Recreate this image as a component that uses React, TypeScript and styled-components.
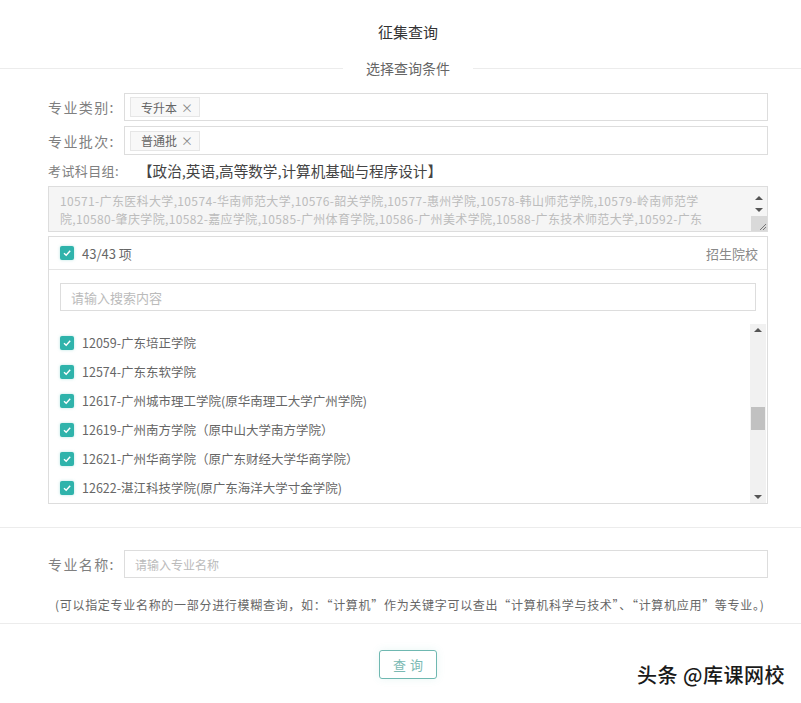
import React from "react";
import styled, { createGlobalStyle } from "styled-components";

const schools = [
    "12059-广东培正学院",
    "12574-广东东软学院",
    "12617-广州城市理工学院(原华南理工大学广州学院)",
    "12619-广州南方学院（原中山大学南方学院）",
    "12621-广州华商学院（原广东财经大学华商学院）",
    "12622-湛江科技学院(原广东海洋大学寸金学院)",
];

const collegeText =
    "10571-广东医科大学,10574-华南师范大学,10576-韶关学院,10577-惠州学院,10578-韩山师范学院,10579-岭南师范学院,10580-肇庆学院,10582-嘉应学院,10585-广州体育学院,10586-广州美术学院,10588-广东技术师范大学,10592-广东财经大学,10822-广东白云学院";

const GlobalStyle = createGlobalStyle`
    * { box-sizing: border-box; }
    body {
        margin: 0;
        background: #fff;
        color: #666;
        font-family: "Noto Sans CJK SC", "Liberation Sans", sans-serif;
    }
`;

const Check = () => (
    <CheckBox>
        <svg width="10" height="10" viewBox="0 0 10 10">
            <path d="M2 5.2 L4.2 7.3 L8.2 2.8" fill="none" stroke="#fff" strokeWidth="1.4" />
        </svg>
    </CheckBox>
);

const App = () => {
    return (
        <Page>
            <GlobalStyle />
            <Title>征集查询</Title>
            <Divider>
                <DividerText>选择查询条件</DividerText>
            </Divider>

            <Section $top={15}>
                <Row>
                    <Label>专业类别:</Label>
                    <TagBox>
                        <Tag>专升本<Close>×</Close></Tag>
                    </TagBox>
                </Row>
                <Row $gap={5}>
                    <Label>专业批次:</Label>
                    <TagBox $h={29}>
                        <Tag>普通批<Close>×</Close></Tag>
                    </TagBox>
                </Row>
                <SubjectRow>
                    <SubjectLabel>考试科目组:</SubjectLabel>
                    <Subject>【政治,英语,高等数学,计算机基础与程序设计】</Subject>
                </SubjectRow>

                <Disabled>
                    <DisabledText>
                        <Lines>{collegeText}</Lines>
                    </DisabledText>
                    <MiniScroll>
                        <Arrow $up />
                        <Arrow />
                        <Grip>
                            <svg width="10" height="10" viewBox="0 0 10 10">
                                <path d="M9 3 L3 9 M9 6 L6 9" stroke="#777" strokeWidth="1" />
                            </svg>
                        </Grip>
                    </MiniScroll>
                </Disabled>

                <Panel>
                    <PanelHeader>
                        <Selected>
                            <Check />
                            <span>43/43 项</span>
                        </Selected>
                        <PanelTitle>招生院校</PanelTitle>
                    </PanelHeader>
                    <SearchWrap>
                        <Input placeholder="请输入搜索内容" />
                    </SearchWrap>
                    <ListArea>
                        <List>
                            {schools.map(s => (
                                <Item key={s}>
                                    <Check />
                                    <span>{s}</span>
                                </Item>
                            ))}
                        </List>
                        <ScrollBar>
                            <Arrow $up />
                            <Track>
                                <Thumb $top={71} $h={23} />
                            </Track>
                            <Arrow />
                        </ScrollBar>
                    </ListArea>
                </Panel>
            </Section>

            <Rule $top={23} />

            <Section $top={22}>
                <Row>
                    <Label>专业名称:</Label>
                    <Input placeholder="请输入专业名称" $small />
                </Row>
                <Hint>
                    (可以指定专业名称的一部分进行模糊查询，如：“计算机”作为关键字可以查出“计算机科学与技术”、“计算机应用”等专业。)
                </Hint>
            </Section>

            <Rule $top={9} />

            <Footer>
                <Button>查询</Button>
            </Footer>

            <Watermark>头条 @库课网校</Watermark>
        </Page>
    );
};

const Page = styled.div`
    position: relative;
    width: 801px;
    height: 703px;
    overflow: hidden;
    background: #fff;
`;

const Title = styled.h1`
    margin: 0;
    padding: 22px 33px 0 48px;
    text-align: center;
    font-size: 15px;
    line-height: 20px;
    font-weight: normal;
    color: #333;
`;

const Divider = styled.div`
    display: flex;
    align-items: center;
    height: 20px;
    margin-top: 16px;

    &::before, &::after {
        content: "";
        height: 1px;
        background: #ececec;
    }
    &::before { flex: 1 0 15px; }
    &::after { flex: 1 0 0; }
`;

const DividerText = styled.span`
    padding: 0 23px;
    font-size: 14px;
    color: #666;
`;

const Section = styled.div<{ $top: number }>`
    display: flex;
    flex-direction: column;
    padding: ${p => p.$top}px 33px 0 48px;
`;

const Row = styled.div<{ $gap?: number }>`
    display: flex;
    align-items: center;
    margin-top: ${p => p.$gap ?? 0}px;
`;

const Label = styled.label`
    flex: 0 0 76px;
    font-size: 14px;
    letter-spacing: 1.4px;
    color: #808080;
    white-space: nowrap;
`;

const SubjectLabel = styled.label`
    flex: 0 0 90px;
    font-size: 13px;
    letter-spacing: 0.4px;
    color: #808080;
    white-space: nowrap;
`;

const TagBox = styled.div<{ $h?: number }>`
    flex: 1;
    display: flex;
    align-items: center;
    height: ${p => p.$h ?? 28}px;
    padding-left: 5px;
    border: 1px solid #ddd;
`;

const Tag = styled.span`
    display: inline-flex;
    align-items: center;
    height: 20px;
    padding: 0 6px 0 10px;
    border: 1px solid #e6e6e6;
    background: #f8f8f8;
    font-size: 12px;
    color: #666;
`;

const Close = styled.span`
    margin-left: 4px;
    color: #888;
`;

const SubjectRow = styled.div`
    display: flex;
    align-items: center;
    height: 22px;
    margin-top: 4px;
`;

const Subject = styled.span`
    font-size: 14.6px;
    color: #444;
    white-space: nowrap;
`;

const Disabled = styled.div`
    display: flex;
    height: 46px;
    margin-top: 5px;
    border: 1px solid #ddd;
    background: #f5f5f5;
    overflow: hidden;
`;

const DisabledText = styled.div`
    flex: 1;
    min-width: 0;
    height: 41px;
    padding: 5px 0 0 11px;
    overflow: hidden;
`;

const Lines = styled.div`
    max-width: 645px;
    font-size: 12px;
    line-height: 18px;
    letter-spacing: 0.35px;
    color: #bcbcbc;
    word-break: break-all;
`;

const MiniScroll = styled.div`
    flex: 0 0 16px;
    display: flex;
    flex-direction: column;
    align-items: center;
    padding-top: 5px;
    background: #f5f5f5;
`;

const Arrow = styled.div<{ $up?: boolean }>`
    flex: 0 0 auto;
    width: 0;
    height: 0;
    margin: 4px auto;
    border-left: 4px solid transparent;
    border-right: 4px solid transparent;
    ${p => p.$up
        ? "border-bottom: 4px solid #555;"
        : "border-top: 4px solid #555;"}
`;

const Grip = styled.div`
    margin-top: auto;
    width: 16px;
    height: 16px;
    display: flex;
    align-items: flex-end;
    justify-content: flex-end;
    background: #d9d9d9;
`;

const Panel = styled.div`
    display: flex;
    flex-direction: column;
    height: 268px;
    margin-top: 4px;
    border: 1px solid #ddd;
`;

const PanelHeader = styled.div`
    display: flex;
    align-items: center;
    justify-content: space-between;
    height: 33px;
    padding: 0 9px 0 11px;
    border-bottom: 1px solid #e5e5e5;
`;

const Selected = styled.div`
    display: flex;
    align-items: center;
    gap: 8px;
    font-size: 13px;
    color: #666;
`;

const PanelTitle = styled.span`
    font-size: 13px;
    color: #888;
`;

const CheckBox = styled.span`
    flex: 0 0 14px;
    display: inline-flex;
    align-items: center;
    justify-content: center;
    width: 14px;
    height: 14px;
    border-radius: 2px;
    background: #2fb3ab;
    box-shadow: 0 0 3px rgba(47, 179, 171, 0.35);
`;

const SearchWrap = styled.div`
    padding: 13px 11px 0 11px;
`;

const Input = styled.input<{ $small?: boolean }>`
    flex: 1;
    width: 100%;
    height: 28px;
    padding: 0 10px;
    border: 1px solid #ddd;
    outline: none;
    font-family: inherit;
    font-size: ${p => (p.$small ? 12 : 13)}px;
    color: #333;

    &::placeholder {
        color: #bbb;
    }
`;

const ListArea = styled.div`
    flex: 1;
    display: flex;
    margin-top: 13px;
    min-height: 0;
`;

const List = styled.div`
    flex: 1;
    padding: 4px 0 0 11px;
    overflow: hidden;
`;

const Item = styled.div`
    display: flex;
    align-items: center;
    gap: 8px;
    height: 29px;
    font-size: 12.5px;
    color: #666;
    white-space: nowrap;
`;

const ScrollBar = styled.div`
    flex: 0 0 16px;
    display: flex;
    flex-direction: column;
    margin-right: 1px;
    background: #f1f1f1;
`;

const Track = styled.div`
    flex: 1;
    padding: 0 1px;
`;

const Thumb = styled.div<{ $top: number; $h: number }>`
    margin-top: ${p => p.$top}px;
    height: ${p => p.$h}px;
    background: #c1c1c1;
`;

const Rule = styled.div<{ $top: number }>`
    height: 1px;
    margin-top: ${p => p.$top}px;
    background: #ececec;
`;

const Hint = styled.p`
    margin: 18px 0 0 7px;
    font-size: 12px;
    line-height: 18px;
    letter-spacing: 0.7px;
    color: #666;
    white-space: nowrap;
`;

const Footer = styled.div`
    display: flex;
    justify-content: center;
    padding: 26px 33px 0 48px;
`;

const Button = styled.button`
    width: 58px;
    height: 29px;
    padding: 0;
    border: 1px solid #6fb8b1;
    border-radius: 3px;
    background: #fff;
    box-shadow: 0 0 8px rgba(80, 180, 170, 0.12);
    font-family: inherit;
    font-size: 13px;
    letter-spacing: 4px;
    text-indent: 4px;
    color: #7ab9b3;
`;

const Watermark = styled.div`
    position: absolute;
    right: 16px;
    bottom: 16px;
    font-size: 20px;
    line-height: 24px;
    font-weight: 500;
    letter-spacing: 0.5px;
    color: #1a1a1a;
    text-shadow: 0 0 2px #fff, 0 0 2px #fff;
`;

export default App;
